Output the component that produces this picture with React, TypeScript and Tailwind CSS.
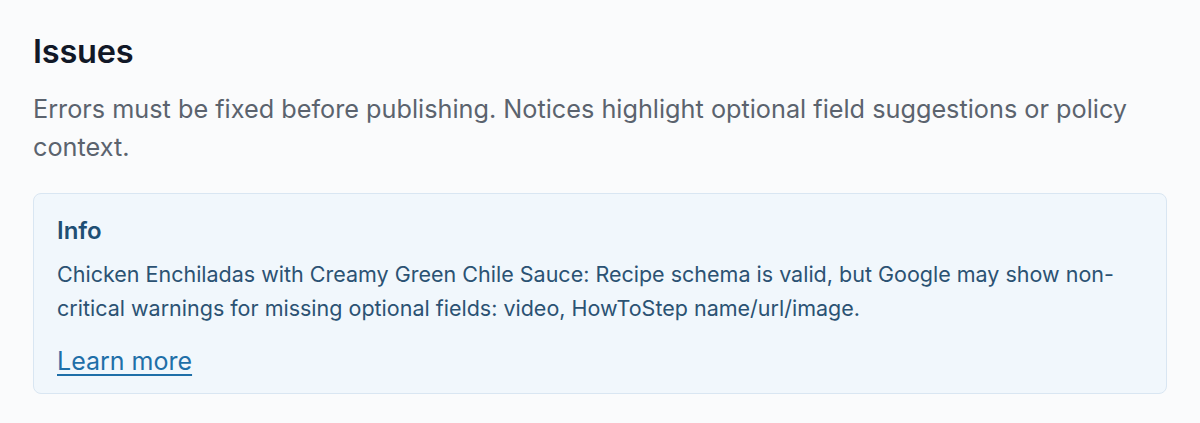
const issue = {
  level: "Info",
  message:
    "Chicken Enchiladas with Creamy Green Chile Sauce: Recipe schema is valid, but Google may show non-critical warnings for missing optional fields: video, HowToStep name/url/image.",
  href: "#",
};

export default function App() {
  return (
    <div
      className="min-h-[423px] w-full bg-[#fafbfc] px-[33px] pt-[30px] text-[#111827]"
      style={{ fontFamily: "Inter, 'Noto Sans', sans-serif" }}
    >
      <h2 className="text-[32.5px] font-semibold leading-[44px] tracking-[-0.2px]">
        Issues
      </h2>
      <p className="mt-[16px] text-[25.25px] leading-[38px] text-[#5b636e]">
        Errors must be fixed before publishing. Notices highlight optional
        field suggestions or policy context.
      </p>

      <div className="mt-[27px] rounded-[8px] border border-[#d9e6f2] bg-[#f1f7fc] px-[23px] pb-[15px] pt-[21px]">
        <h3 className="text-[24px] font-semibold leading-[32px] text-[#1f4f74]">
          {issue.level}
        </h3>
        <p className="mt-[10px] text-[21.5px] leading-[34px] text-[#2b5273]">
          {issue.message}
        </p>
        <a
          href={issue.href}
          className="mt-[19px] inline-block text-[25px] leading-[34px] text-[#1f6fa8] underline underline-offset-[4px]"
        >
          Learn more
        </a>
      </div>
    </div>
  );
}
